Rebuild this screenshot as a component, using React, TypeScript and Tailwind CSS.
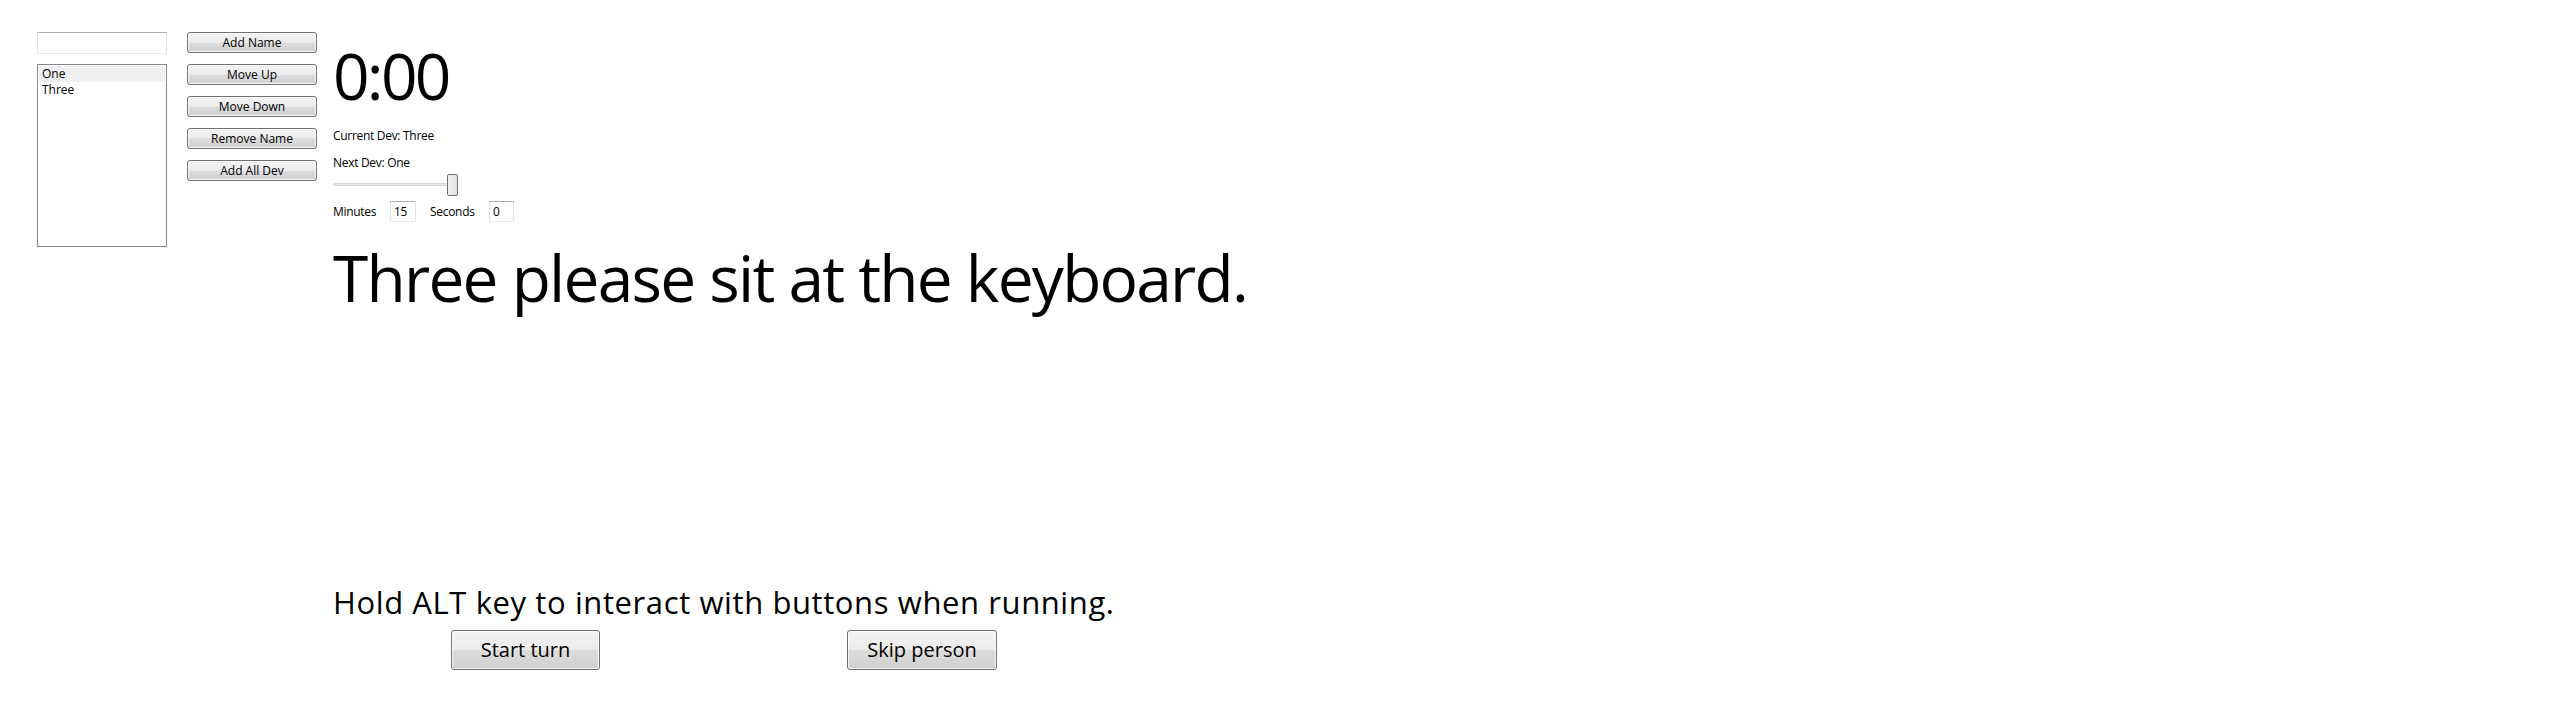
import React from 'react';

const font = { fontFamily: '"Open Sans", "Noto Sans", sans-serif' };

function AeroButton({ label, className }: { label: string; className: string }) {
  return (
    <button
      className={`rounded-[3px] border border-[#707070] bg-[linear-gradient(to_bottom,#f3f3f3_0%,#ebebeb_50%,#dddddd_50%,#cfcfcf_100%)] text-black shadow-[inset_0_0_0_1px_rgba(255,255,255,0.8)] flex items-center justify-center leading-none ${className}`}
    >
      {label}
    </button>
  );
}

export default function App() {
  const names = ['One', 'Three'];
  const sideButtons = ['Add Name', 'Move Up', 'Move Down', 'Remove Name', 'Add All Dev'];

  return (
    <div className="w-[2560px] h-[720px] bg-white text-black flex overflow-hidden" style={font}>
      {/* names column */}
      <div className="ml-[37px] mt-[32px] flex flex-col w-[130px]">
        <input
          className="h-[22px] w-full border border-[#abadb3] border-l-[#e2e3ea] border-r-[#e2e3ea] border-b-[#e3e9ef] outline-none px-1 text-[12px]"
        />
        <div className="mt-[10px] h-[183px] w-full border border-[#828790] p-[1px] flex flex-col">
          {names.map((n, i) => (
            <div
              key={n}
              className={`h-[16px] px-[3px] text-[12px] leading-[16px] ${i === 0 ? 'bg-[#f0f0f0]' : ''}`}
            >
              {n}
            </div>
          ))}
        </div>
      </div>

      {/* side buttons */}
      <div className="ml-[20px] mt-[32px] flex flex-col gap-[11px] w-[130px]">
        {sideButtons.map((b) => (
          <AeroButton key={b} label={b} className="h-[21px] w-full text-[12px]" />
        ))}
      </div>

      {/* main */}
      <div className="ml-[16px] flex flex-col">
        <div className="mt-[44px] text-[64px] leading-[64px] tracking-[-2.75px]">0:00</div>
        <div className="mt-[20px] text-[12px] leading-[16px] tracking-[-0.3px]">Current Dev: Three</div>
        <div className="mt-[11px] text-[12px] leading-[16px] tracking-[-0.3px]">Next Dev: One</div>

        <div className="mt-[3px] relative h-[22px] w-[124px]">
          <div className="absolute left-0 right-0 top-[9px] h-[3px] rounded-sm border border-[#d6d6d6] bg-[#e7eaea]" />
          <div className="absolute left-[114px] top-0 w-[11px] h-[22px] rounded-[2px] border border-[#707070] bg-[linear-gradient(to_right,#f2f2f2,#e0e0e0)]" />
        </div>

        <div className="mt-[5px] flex items-center text-[12px] tracking-[-0.3px]">
          <span className="w-[57px]">Minutes</span>
          <div className="h-[21px] w-[26px] border border-[#abadb3] border-l-[#e2e3ea] border-r-[#e2e3ea] border-b-[#e3e9ef] px-[3px] pt-[2px] leading-[16px]">15</div>
          <span className="ml-[14px] w-[59px]">Seconds</span>
          <div className="h-[21px] w-[25px] border border-[#abadb3] border-l-[#e2e3ea] border-r-[#e2e3ea] border-b-[#e3e9ef] px-[3px] pt-[2px] leading-[16px]">0</div>
        </div>

        <div className="mt-[24px] text-[64px] leading-[64px] tracking-[-1.75px] whitespace-nowrap">Three please sit at the keyboard.</div>

        <div className="mt-[277px] text-[31px] leading-[31px] tracking-[0.6px] whitespace-nowrap">
          Hold ALT key to interact with buttons when running.
        </div>
        <div className="mt-[12px] flex">
          <AeroButton label="Start turn" className="ml-[118px] h-[40px] w-[149px] text-[20px]" />
          <AeroButton label="Skip person" className="ml-[247px] h-[40px] w-[150px] text-[20px]" />
        </div>
      </div>
    </div>
  );
}
